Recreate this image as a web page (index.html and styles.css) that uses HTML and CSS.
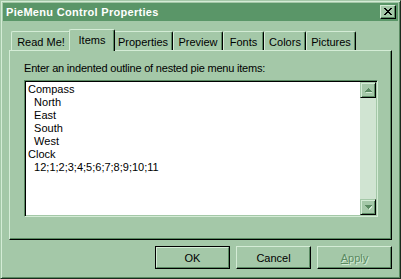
FILE: index.html
```html
<!DOCTYPE html>
<html>
<head>
<meta charset="utf-8">
<title>PieMenu Control Properties</title>
<link rel="stylesheet" href="styles.css">
</head>
<body>
<div class="window">
  <div class="titlebar">
    <span class="title">PieMenu Control Properties</span>
    <span class="close">
      <svg width="8" height="7" viewBox="0 0 8 7" shape-rendering="crispEdges">
        <rect x="0" y="0" width="2" height="1"/><rect x="6" y="0" width="2" height="1"/>
        <rect x="1" y="1" width="2" height="1"/><rect x="5" y="1" width="2" height="1"/>
        <rect x="2" y="2" width="4" height="1"/>
        <rect x="3" y="3" width="2" height="1"/>
        <rect x="2" y="4" width="4" height="1"/>
        <rect x="1" y="5" width="2" height="1"/><rect x="5" y="5" width="2" height="1"/>
        <rect x="0" y="6" width="2" height="1"/><rect x="6" y="6" width="2" height="1"/>
      </svg>
    </span>
  </div>
  <div class="tabs">
    <div class="tab t-readme">Read Me!</div>
    <div class="tab active t-items">Items</div>
    <div class="tab t-props">Properties</div>
    <div class="tab t-preview">Preview</div>
    <div class="tab t-fonts">Fonts</div>
    <div class="tab t-colors">Colors</div>
    <div class="tab t-pics">Pictures</div>
  </div>
  <div class="panel">
    <div class="label">Enter an indented outline of nested pie menu items:</div>
    <div class="edit">
      <div class="text">Compass
  North
  East
  South
  West
Clock
  12;1;2;3;4;5;6;7;8;9;10;11</div>
      <div class="scrollbar">
        <div class="sbtn">
          <svg width="7" height="5" viewBox="0 0 7 5" shape-rendering="crispEdges">
            <polygon class="arrow-hi" points="4,1 8,5 1,5"/>
            <polygon class="arrow" points="3.5,0 7,4 0,4"/>
          </svg>
        </div>
        <div class="track"></div>
        <div class="sbtn">
          <svg width="7" height="5" viewBox="0 0 7 5" shape-rendering="crispEdges">
            <polygon class="arrow-hi" points="1,1 8,1 4,5"/>
            <polygon class="arrow" points="0,0 7,0 3.5,4"/>
          </svg>
        </div>
      </div>
    </div>
  </div>
  <div class="buttons">
    <div class="btn default"><span class="btn-in">OK</span></div>
    <div class="btn"><span class="btn-in">Cancel</span></div>
    <div class="btn disabled"><span class="btn-in"><u>A</u>pply</span></div>
  </div>
</div>
</body>
</html>
```

FILE: styles.css
```css
body {
  margin: 0;
  background: #a4c8a8;
  font-family: "Liberation Sans", Arial, sans-serif;
  font-size: 11px;
  color: #000;
}

.window {
  width: 401px;
  height: 279px;
  box-sizing: border-box;
  border: 1px solid;
  border-color: #a4c8a8 #1c2a1e #1c2a1e #a4c8a8;
  box-shadow: inset 1px 1px 0 #d4ecd6, inset -1px -1px 0 #5a8a62;
  padding: 2px;
  display: flex;
  flex-direction: column;
  background: #a4c8a8;
}

.titlebar {
  height: 18px;
  background: #5a9668;
  display: flex;
  align-items: center;
  justify-content: space-between;
  padding: 0 2px 0 3px;
}

.title {
  color: #fff;
  font-weight: bold;
  font-size: 11px;
  letter-spacing: 0.3px;
}

.close {
  width: 16px;
  height: 14px;
  box-sizing: border-box;
  background: #a4c8a8;
  border: 1px solid;
  border-color: #d4ecd6 #000 #000 #d4ecd6;
  box-shadow: inset -1px -1px 0 #5a8a62;
  display: flex;
  align-items: center;
  justify-content: center;
  padding: 0 0 1px 0;
}

.close svg { fill: #000; display: block; }

.tabs {
  display: flex;
  align-items: flex-end;
  height: 21px;
  margin: 8px 0 0 8px;
}

.tab {
  height: 19px;
  box-sizing: border-box;
  padding: 4px 0 0;
  text-align: center;
  border-top: 1px solid #d4ecd6;
  border-left: 1px solid #d4ecd6;
  border-right: 1px solid #000;
  box-shadow: inset -1px 0 0 #5a8a62;
  border-radius: 2px 2px 0 0;
  background: #a4c8a8;
}

.t-readme { width: 60px; }
.t-items { width: 40px; }
.t-props { width: 60px; }
.t-preview { width: 50px; }
.t-fonts { width: 41px; }
.t-colors { width: 42px; }
.t-pics { width: 50px; }

.tab.active {
  width: 46px;
  height: 22px;
  margin: 0 -2px -1px;
  padding-top: 4px;
  position: relative;
  z-index: 2;
}

.panel {
  margin: 0 6px;
  height: 190px;
  box-sizing: border-box;
  border: 1px solid;
  border-color: #d4ecd6 #000 #000 #d4ecd6;
  box-shadow: inset -1px -1px 0 #5a8a62;
  padding: 11px 13px 0 14px;
}

.label {
  line-height: 13px;
  height: 13px;
  margin-bottom: 5px;
  letter-spacing: -0.2px;
}

.edit {
  width: 354px;
  height: 137px;
  box-sizing: border-box;
  border: 1px solid;
  border-color: #5a8a62 #d4ecd6 #d4ecd6 #5a8a62;
  box-shadow: inset 1px 1px 0 #000, inset -1px -1px 0 #a4c8a8;
  padding: 1px;
  background: #fff;
  display: flex;
}

.text {
  flex: 1;
  white-space: pre;
  line-height: 13px;
  padding: 1px 0 0 2px;
}

.scrollbar {
  width: 16px;
  display: flex;
  flex-direction: column;
}

.track {
  flex: 1;
  background: #d0e4d2;
}

.sbtn {
  width: 16px;
  height: 16px;
  box-sizing: border-box;
  background: #a4c8a8;
  border: 1px solid;
  border-color: #a4c8a8 #000 #000 #a4c8a8;
  box-shadow: inset 1px 1px 0 #d4ecd6, inset -1px -1px 0 #5a8a62;
  display: flex;
  align-items: center;
  justify-content: center;
}

.sbtn svg { display: block; }
.arrow { fill: #5a8a62; }
.arrow-hi { fill: #d4ecd6; }

.buttons {
  display: flex;
  justify-content: flex-end;
  gap: 6px;
  margin: 6px 6px 0 0;
}

.btn {
  width: 75px;
  height: 23px;
  box-sizing: border-box;
  border: 1px solid;
  border-color: #d4ecd6 #000 #000 #d4ecd6;
  box-shadow: inset -1px -1px 0 #5a8a62;
  display: flex;
  align-items: center;
  justify-content: center;
}

.btn.default {
  border: 1px solid #000;
}

.btn.default .btn-in {
  align-self: stretch;
  flex: 1;
  display: flex;
  align-items: center;
  justify-content: center;
  border: 1px solid;
  border-color: #d4ecd6 #5a8a62 #5a8a62 #d4ecd6;
}

.btn.disabled {
  color: #5a8a62;
  text-shadow: 1px 1px 0 #d4ecd6;
}

.btn u { text-decoration: underline; }
```
